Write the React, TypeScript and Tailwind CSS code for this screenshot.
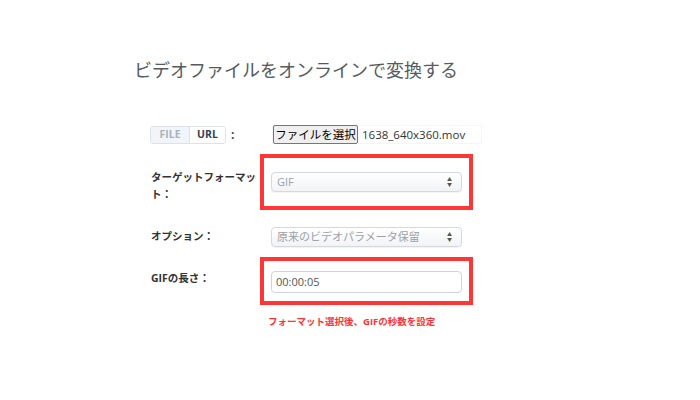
import React from 'react';

const font = { fontFamily: '"Open Sans", "Noto Sans CJK JP", sans-serif' };

const SelectBox = ({ value }: { value: string }) => (
  <div className="flex h-[20px] w-[191px] items-center justify-between rounded-[4px] border border-[#d4d9df] bg-gradient-to-b from-white to-[#f1f3f5] pl-[5px] pr-[9px] text-[11px] text-[#9aa0a8] shadow-[0_1px_1px_rgba(0,0,0,0.05)]">
    <span>{value}</span>
    <span className="flex flex-col items-center leading-none text-[#555]">
      <span className="text-[5px]">▲</span>
      <span className="text-[5px]">▼</span>
    </span>
  </div>
);

export default function App() {
  return (
    <div className="h-[400px] w-[700px] bg-white" style={font}>
      <div className="pl-[134px] pt-[58px]">
        <h1 className="text-[18px] leading-[24px] font-normal text-[#555a60]">
          ビデオファイルをオンラインで変換する
        </h1>
      </div>

      <div className="mt-[43px] flex flex-col pl-[150px]">
        {/* source row */}
        <div className="flex h-[19px] items-center">
          <div className="flex w-[110px] items-center">
            <div className="flex h-[18px] overflow-hidden rounded-[3px] border border-[#dde2e8] text-[10.5px] font-bold">
              <span className="flex w-[38px] items-center justify-center bg-[#f1f4f8] text-[#aab2bc]">FILE</span>
              <span className="flex w-[36px] items-center justify-center border-l border-[#dde2e8] bg-white text-[#3a4150]">URL</span>
            </div>
            <span className="ml-[5px] text-[12px] font-bold text-[#444]">:</span>
          </div>
          <div className="ml-[12px] flex h-[19px] items-center border border-[#f5f5f5] pr-[16px]">
            <button className="flex h-[19px] w-[85px] items-center justify-center rounded-[2px] border border-[#767676] bg-[#efefef] text-[11.5px] text-black">
              ファイルを選択
            </button>
            <span className="ml-[4px] text-[11.5px] text-[#333]">1638_640x360.mov</span>
          </div>
        </div>

        {/* target format */}
        <div className="mt-[10px] flex items-start">
          <div className="w-[110px] pl-[1px] pt-[15px] pr-[2px] text-[10.5px] leading-[17px] font-bold text-[#333]">
            ターゲットフォーマット：
          </div>
          <div className="w-[213px] border-[4px] border-[#ff3636] pb-[14px] pl-[7px] pr-[6px] pt-[14px]">
            <SelectBox value="GIF" />
          </div>
        </div>

        {/* option */}
        <div className="mt-[17px] flex items-center">
          <div className="w-[110px] pl-[1px] text-[10.5px] font-bold text-[#333]">オプション：</div>
          <div className="pl-[11px]">
            <SelectBox value="原来のビデオパラメータ保留" />
          </div>
        </div>

        {/* gif length */}
        <div className="mt-[10px] flex items-start">
          <div className="w-[110px] pl-[1px] pt-[13px] text-[10.5px] leading-[17px] font-bold text-[#333]">
            GIFの長さ：
          </div>
          <div className="w-[213px] border-[4px] border-[#ff3636] pb-[8px] pl-[7px] pr-[6px] pt-[10px]">
            <div className="flex h-[22px] w-[191px] items-center rounded-[4px] border border-[#cfd4da] bg-white pl-[4px] text-[11px] text-[#555]">
              00:00:05
            </div>
          </div>
        </div>

        <div className="mt-[10px] pl-[118px] text-[9.5px] leading-[14px] font-bold text-[#ff3333]">
          フォーマット選択後、GIFの秒数を設定
        </div>
      </div>
    </div>
  );
}
